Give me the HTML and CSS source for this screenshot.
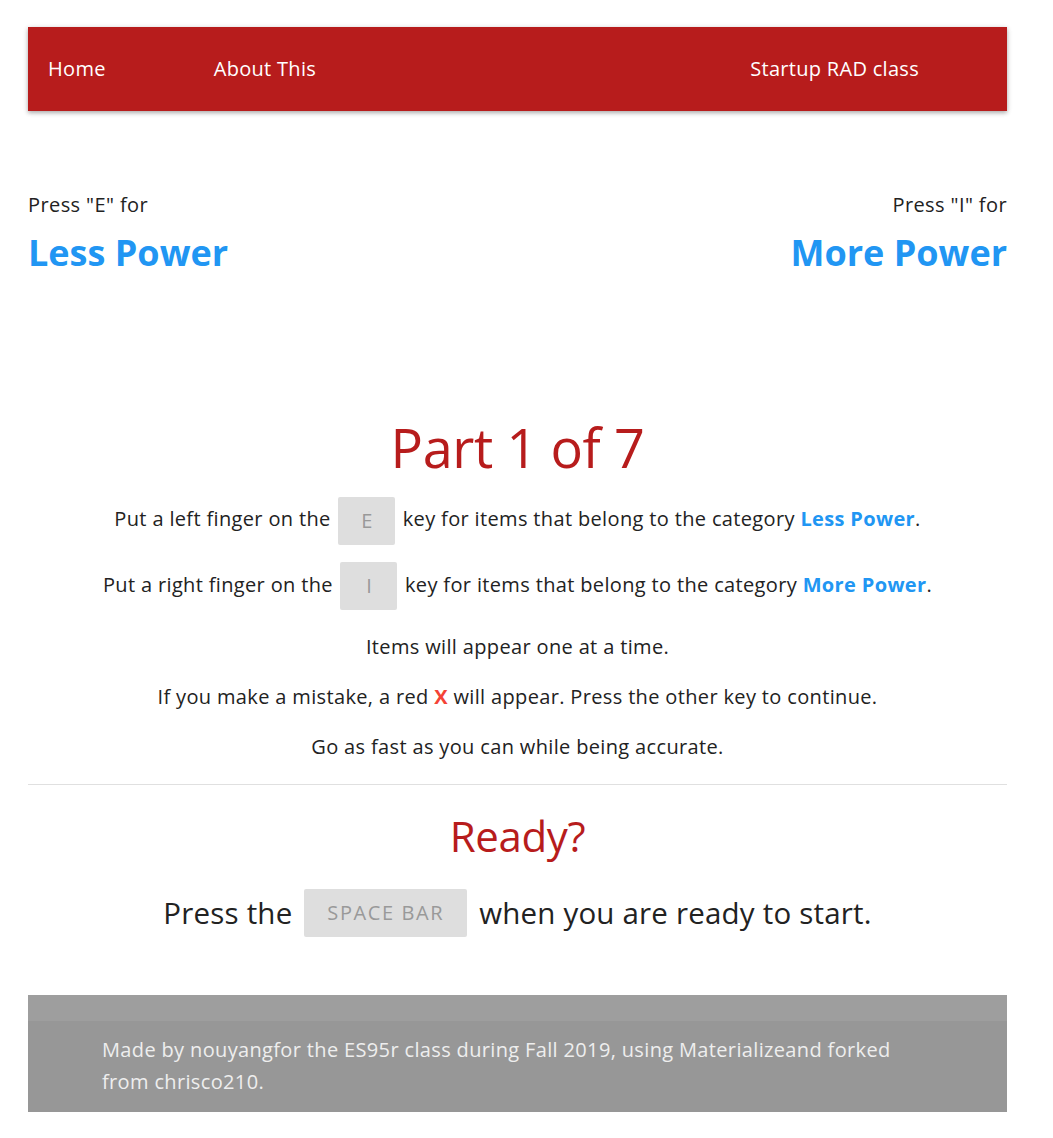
FILE: index.html
```html
<!DOCTYPE html>
<html>
<head>
<meta charset="utf-8">
<link rel="stylesheet" href="styles.css">
</head>
<body>
<div class="page">
  <nav class="nav">
    <a class="nav-link home">Home</a>
    <a class="nav-link about">About This</a>
    <span class="spacer"></span>
    <a class="nav-link startup">Startup RAD class</a>
  </nav>

  <div class="cats">
    <div class="cat left">
      <div class="press">Press "E" for</div>
      <div class="cat-name">Less Power</div>
    </div>
    <div class="cat right">
      <div class="press">Press "I" for</div>
      <div class="cat-name">More Power</div>
    </div>
  </div>

  <section class="instructions">
    <h1 class="part">Part 1 of 7</h1>
    <p class="line key-line">Put a left finger on the <span class="key">E</span> key for items that belong to the category <b class="blue">Less Power</b>.</p>
    <p class="line key-line">Put a right finger on the <span class="key">I</span> key for items that belong to the category <b class="blue">More Power</b>.</p>
    <p class="line first-plain">Items will appear one at a time.</p>
    <p class="line">If you make a mistake, a red <b class="redx">X</b> will appear. Press the other key to continue.</p>
    <p class="line">Go as fast as you can while being accurate.</p>
  </section>

  <hr class="divider">

  <section class="ready">
    <h2 class="ready-title">Ready?</h2>
    <p class="ready-line">Press the <span class="key space">SPACE BAR</span> when you are ready to start.</p>
  </section>

  <footer class="footer">
    <div class="footer-band"></div>
    <div class="footer-text">Made by nouyangfor the ES95r class during Fall 2019, using Materializeand forked from chrisco210.</div>
  </footer>
</div>
</body>
</html>
```
FILE: styles.css
```css
html, body {
  margin: 0;
  padding: 0;
  background: #fff;
}
body {
  font-family: "Open Sans", "Noto Sans", sans-serif;
  color: #222;
}
.page {
  width: 979px;
  margin-left: 28px;
  padding-top: 27px;
}
.nav {
  height: 84px;
  background: #b71c1c;
  display: flex;
  align-items: center;
  box-shadow: 0 2px 4px rgba(0,0,0,0.25), 0 1px 6px rgba(0,0,0,0.12);
  padding-left: 20px;
  box-sizing: border-box;
}
.nav-link {
  color: #fff;
  font-size: 20px;
  letter-spacing: 0.3px;
  position: relative;
  top: -1px;
}
.about { margin-left: 108px; }
.spacer { flex: 1; }
.startup { margin-right: 88px; }

.cats {
  display: flex;
  justify-content: space-between;
  margin-top: 80px;
}
.cat.right { text-align: right; }
.press {
  font-size: 20px;
  letter-spacing: 0.4px;
  line-height: 28px;
  color: #222;
}
.cat-name {
  font-size: 36px;
  font-weight: 700;
  color: #2196f3;
  margin-top: 12px;
  line-height: 44px;
}

.instructions {
  text-align: center;
  margin-top: 140px;
}
.part {
  font-size: 54px;
  font-weight: 400;
  color: #b71c1c;
  margin: 0 0 8px;
  line-height: 64px;
  letter-spacing: -0.4px;
}
.line {
  font-size: 20px;
  letter-spacing: 0.35px;
  margin: 0;
  line-height: 28px;
  padding: 11px 0;
}
.key-line {
  padding: 8px 0;
  line-height: 48px;
}
.first-plain { margin-top: 4px; }
.key {
  display: inline-block;
  background: #dedede;
  color: #999;
  border-radius: 2px;
  width: 57px;
  height: 48px;
  line-height: 48px;
  vertical-align: middle;
  text-align: center;
  margin: 0 2px;
  letter-spacing: 0;
}
.blue { color: #2196f3; }
.redx { color: #f44336; }

.divider {
  border: 0;
  border-top: 1px solid #e0e0e0;
  margin: 12px 0 0;
}
.ready { text-align: center; }
.ready-title {
  font-size: 42px;
  font-weight: 400;
  color: #b71c1c;
  margin: 26px 0 0;
  line-height: 50px;
  letter-spacing: -0.4px;
}
.ready-line {
  font-size: 29.5px;
  letter-spacing: 0.2px;
  margin: 28px 0 0;
  line-height: 48px;
}
.key.space {
  width: 163px;
  font-size: 20px;
  letter-spacing: 1.6px;
  margin: 0 4px;
  position: relative;
  top: -3px;
}

.footer {
  margin-top: 55px;
  background: #979797;
  height: 117px;
}
.footer-band {
  height: 26px;
  background: #9e9e9e;
}
.footer-text {
  color: #eee;
  font-size: 20px;
  letter-spacing: 0.35px;
  line-height: 32px;
  padding: 13px 0 0 74px;
  width: 810px;
}
```
